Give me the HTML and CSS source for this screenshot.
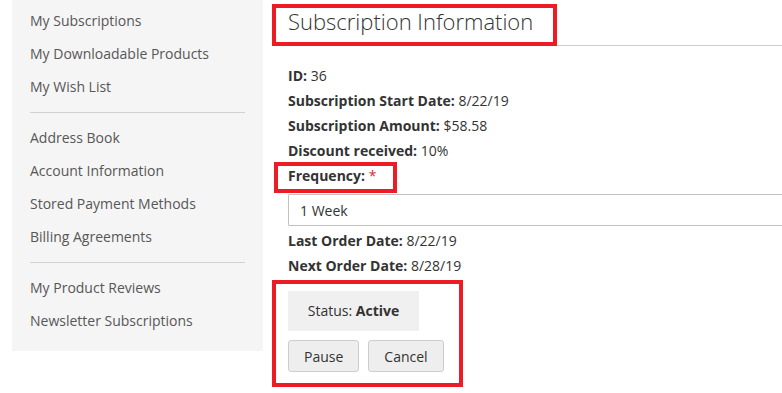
FILE: index.html
```html
<!DOCTYPE html>
<html lang="en">

<head>
    <meta charset="UTF-8">
    <meta name="viewport" content="width=device-width, initial-scale=1.0">
    <title>Subscription Information</title>
    <link rel="stylesheet" href="styles.css">
</head>

<body>
    <div class="page">
        <div class="sidebar">
            <a class="nav-item" href="#">My Subscriptions</a>
            <a class="nav-item" href="#">My Downloadable Products</a>
            <a class="nav-item" href="#">My Wish List</a>
            <div class="nav-sep"></div>
            <a class="nav-item" href="#">Address Book</a>
            <a class="nav-item" href="#">Account Information</a>
            <a class="nav-item" href="#">Stored Payment Methods</a>
            <a class="nav-item" href="#">Billing Agreements</a>
            <div class="nav-sep"></div>
            <a class="nav-item" href="#">My Product Reviews</a>
            <a class="nav-item" href="#">Newsletter Subscriptions</a>
        </div>

        <div class="main">
            <div class="title-bar">
                <h1 class="title mark">Subscription Information</h1>
            </div>

            <div class="info">
                <div class="row"><b>ID:</b> 36</div>
                <div class="row"><b>Subscription Start Date:</b> 8/22/19</div>
                <div class="row"><b>Subscription Amount:</b> $58.58</div>
                <div class="row"><b>Discount received:</b> 10%</div>
                <div class="row"><span class="freq mark"><b>Frequency:</b> <span class="req">*</span></span></div>
                <select class="select" name="frequency">
                    <option>1 Week</option>
                    <option>2 Weeks</option>
                    <option>1 Month</option>
                </select>
                <div class="row"><b>Last Order Date:</b> 8/22/19</div>
                <div class="row"><b>Next Order Date:</b> 8/28/19</div>

                <div class="actions mark">
                    <div class="status">Status: <b>Active</b></div>
                    <div class="buttons">
                        <button class="btn" type="button">Pause</button>
                        <button class="btn" type="button">Cancel</button>
                    </div>
                </div>
            </div>
        </div>
    </div>
</body>

</html>
```

FILE: styles.css
```css
body {
    margin: 0;
    font-family: "Open Sans", "Liberation Sans", sans-serif;
    font-size: 14px;
    color: #333;
    background: #fff;
}

.page {
    display: flex;
    align-items: flex-start;
    padding-left: 12px;
}

.sidebar {
    width: 251px;
    flex: none;
    background: #f5f5f5;
    padding: 4px 0 14px;
}

.nav-item {
    display: block;
    height: 33px;
    line-height: 33px;
    padding-left: 18px;
    color: #575757;
    text-decoration: none;
}

.nav-sep {
    height: 1px;
    background: #d1d1d1;
    margin: 9px 18px 8px 18px;
}

.main {
    flex: 1;
    min-width: 0;
    margin-left: 9px;
    padding-bottom: 30px;
    overflow: hidden;
}

/* red annotation frames */
.mark {
    position: relative;
}

.mark::after {
    content: "";
    position: absolute;
    border: 4px solid #ed1c24;
}

.title-bar {
    border-bottom: 1px solid #ccc;
    height: 45px;
    padding-left: 4px;
}

.title {
    display: inline-block;
    margin: 0;
    padding: 0 12px;
    font-size: 22px;
    font-weight: 300;
    line-height: 42px;
    color: #333;
}

.title::after {
    left: -4px;
    right: -12px;
    top: 4px;
    bottom: -4px;
}

.info {
    padding: 17px 0 0 16px;
}

.row {
    line-height: 25px;
}

.row b {
    font-weight: 700;
}

.freq {
    display: inline-block;
}

.freq::after {
    left: -14px;
    right: -21px;
    top: -1px;
    bottom: -5px;
}

.req {
    color: #e02b27;
}

.select {
    display: block;
    width: 560px;
    height: 32px;
    margin: 6px 0 2px;
    padding: 0 11px;
    border: 1px solid #c2c2c2;
    border-radius: 1px;
    background: #fff;
    font-family: inherit;
    font-size: 14px;
    color: #333;
    appearance: none;
}

.actions {
    display: inline-block;
    margin-top: 13px;
}

.actions::after {
    left: -16px;
    right: -19px;
    top: -11px;
    bottom: -15px;
}

.status {
    width: 131px;
    height: 40px;
    line-height: 40px;
    text-align: center;
    background: #f0f0f0;
}

.buttons {
    display: flex;
    gap: 9px;
    margin-top: 9px;
}

.btn {
    height: 32px;
    padding: 0 15px;
    border: 1px solid #cdcdcd;
    border-radius: 3px;
    background: #eee;
    font-family: inherit;
    font-size: 14px;
    color: #333;
}
```
